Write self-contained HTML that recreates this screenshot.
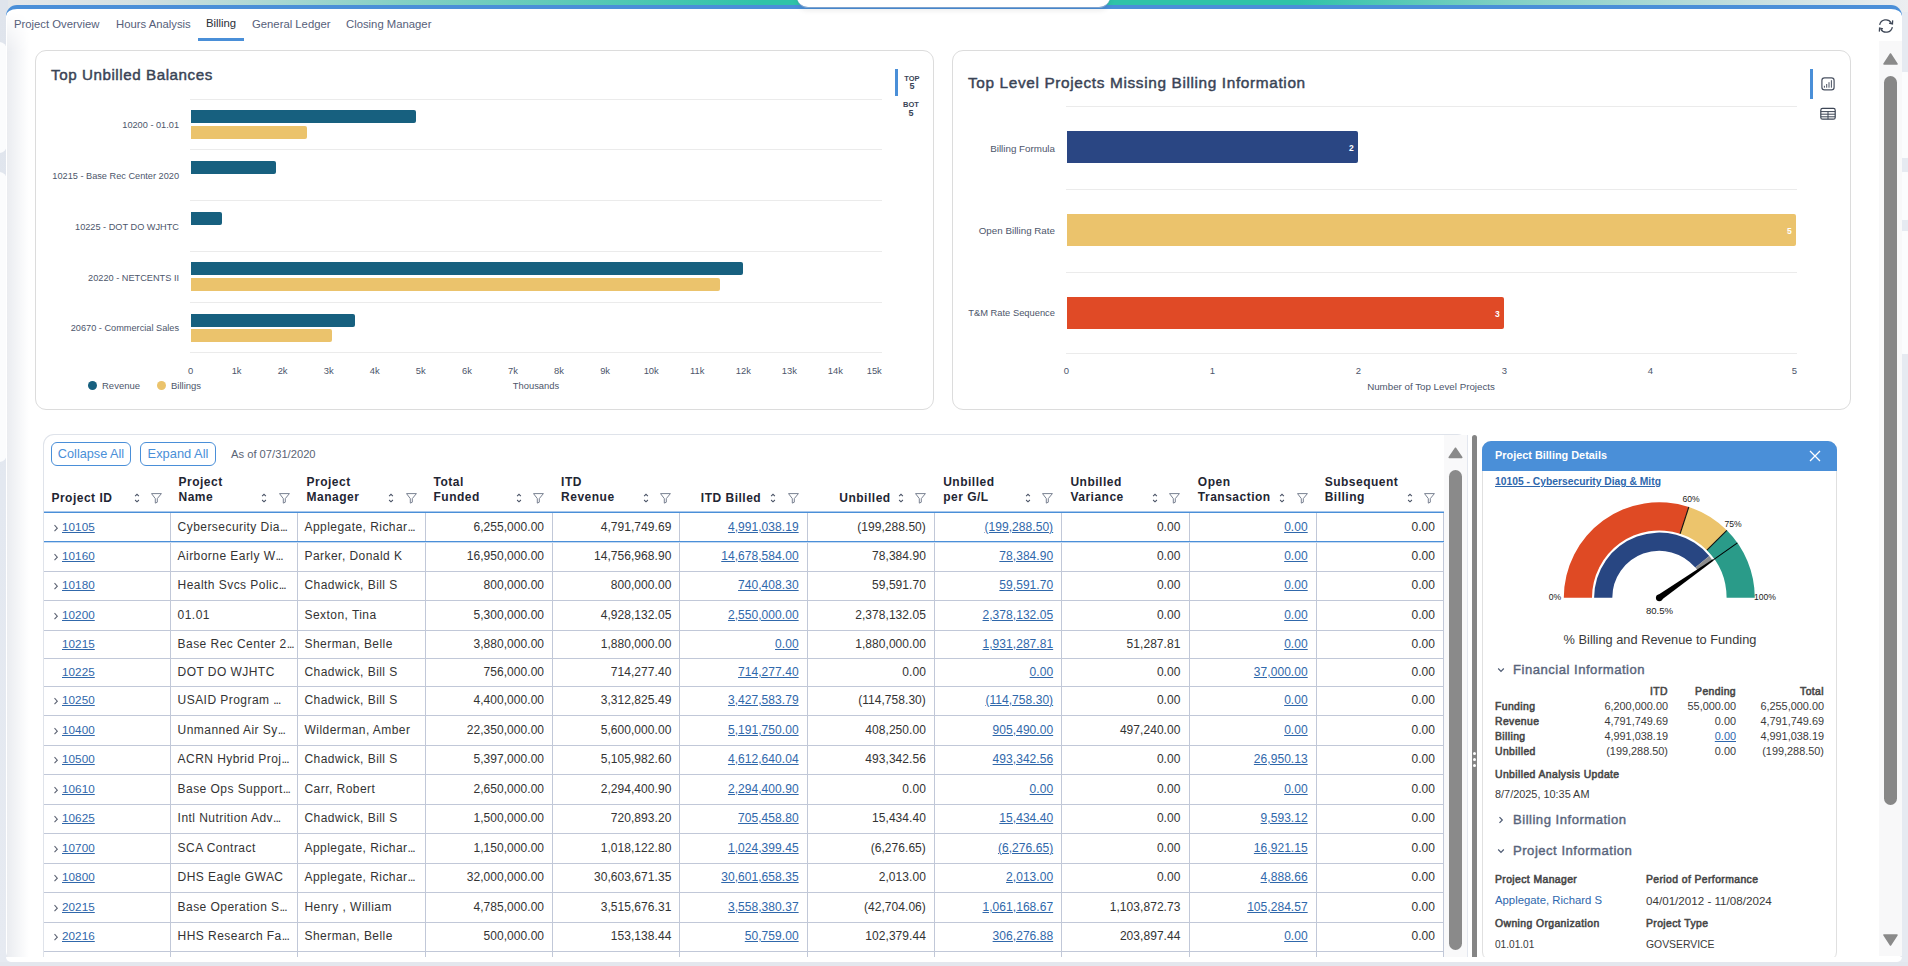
<!DOCTYPE html><html><head><meta charset='utf-8'><style>
*{box-sizing:border-box;margin:0;padding:0}
html,body{width:1908px;height:966px;overflow:hidden;background:#e6eaf1;font-family:"Liberation Sans", sans-serif;color:#333}
.a{position:absolute;white-space:nowrap}
.topgrad{position:absolute;left:0;top:0;width:1908px;height:12px;background:linear-gradient(90deg,#e6e8eb 0%,#d3e0e2 7%,#84d0c4 21%,#2fc3a8 40%,#2fc3a8 68%,#80d0c4 79%,#c6dfe0 92%,#eceef1 100%)}
.leftgrad{position:absolute;left:0;top:0;width:8px;height:966px;background:linear-gradient(180deg,#dfe4ec 0%,#e3e8f0 50%,#e6eaf1 100%)}
.panel{position:absolute;left:6px;top:5px;width:1896px;height:957px;background:#fff;border-radius:11px;border-top:4px solid #4a8fd8}
.card{position:absolute;background:#fff;border:1px solid #dcdcdc;border-radius:11px}
.tab{position:absolute;top:18px;font-size:11.3px;color:#56607a;white-space:nowrap}
.ylab{position:absolute;font-size:9.2px;color:#4d566b;white-space:nowrap;text-align:right}
.xlab{position:absolute;font-size:9.4px;color:#4d566b;white-space:nowrap;transform:translateX(-50%)}
.grid{position:absolute;height:1px;background:#ebebeb}
.bar{position:absolute;border-radius:0 2px 2px 0}
.th{position:absolute;font-size:12px;font-weight:bold;color:#1f2633;letter-spacing:0.5px;line-height:15px;white-space:nowrap}
.td{position:absolute;font-size:12px;color:#333;white-space:nowrap;letter-spacing:0.05px}
.tdt{letter-spacing:0.45px}
.lk{color:#3068ab;text-decoration:underline;text-underline-offset:0.6px}
.vl{position:absolute;width:1px;background:#c1c8d8}
.hl{position:absolute;height:1px;background:#c1c8d8}
</style></head><body>
<div class='topgrad'></div><div class='leftgrad'></div>
<div class='a' style='left:-10px;top:42px;width:17px;height:111px;background:#fbfcfd;border-radius:8px'></div>
<div class='a' style='left:-10px;top:172px;width:17px;height:290px;background:#fbfcfd;border-radius:8px'></div>
<div class='a' style='left:1895px;top:72px;width:20px;height:86px;background:#fbfcfd;border-radius:8px'></div>
<div class='a' style='left:1895px;top:172px;width:20px;height:48px;background:#fbfcfd;border-radius:8px'></div>
<div class='a' style='left:1895px;top:231px;width:20px;height:123px;background:#fbfcfd;border-radius:8px'></div>
<div class='panel'></div>
<div class='a' style='left:797px;top:-10px;width:313px;height:18px;background:#fff;border-radius:0 0 11px 11px;border-bottom:1px solid #7ea3cf;box-shadow:0 3px 5px rgba(0,0,0,0.07)'></div>
<div class='a' style='left:7px;top:12px;width:22px;height:945px;background:linear-gradient(90deg,#eaecf0,#fff);-webkit-mask-image:linear-gradient(180deg,transparent 0,#000 40px)'></div>
<div class='tab' style='left:14px;'>Project Overview</div>
<div class='tab' style='left:116px;'>Hours Analysis</div>
<div class='tab' style='left:206px;color:#2b2f38;top:17px;'>Billing</div>
<div class='tab' style='left:252px;'>General Ledger</div>
<div class='tab' style='left:346px;'>Closing Manager</div>
<div class='a' style='left:198px;top:38px;width:46px;height:3px;background:#4a8fd8'></div>
<svg class='a' style='left:1877px;top:17.3px' width='18' height='18' viewBox='0 0 17 17'><g fill='none' stroke='#3d4656' stroke-width='1.2'><path d='M2.5 7.5 A6 6 0 0 1 13.5 5.5'/><path d='M14.5 9.5 A6 6 0 0 1 3.5 11.5'/></g><path d='M14.8 3.2 L14.6 6.6 L11.4 5.8' fill='none' stroke='#3d4656' stroke-width='1.2'/><path d='M2.2 13.8 L2.4 10.4 L5.6 11.2' fill='none' stroke='#3d4656' stroke-width='1.15'/></svg>
<div class='a' style='left:1879px;top:41px;width:23px;height:915px;background:#f8f8f9'></div>
<svg class='a' style='left:1883px;top:53px' width='15' height='12'><path d='M7.5 1 L14 11 L1 11 Z' fill='#8a8a8a' stroke='#8a8a8a' stroke-width='1.5' stroke-linejoin='round'/></svg>
<div class='a' style='left:1884px;top:76px;width:13px;height:729px;background:#878787;border-radius:7px'></div>
<svg class='a' style='left:1883px;top:934px' width='15' height='12'><path d='M1 1 L14 1 L7.5 11 Z' fill='#8a8a8a' stroke='#8a8a8a' stroke-width='1.5' stroke-linejoin='round'/></svg>
<div class='card' style='left:35px;top:50px;width:899px;height:360px'></div>
<div class='a' style='left:51px;top:66px;font-size:15.2px;letter-spacing:0.55px;-webkit-text-stroke:0.45px #3a4456;color:#3a4456'>Top Unbilled Balances</div>
<div class='grid' style='left:190px;top:99px;width:692px'></div>
<div class='grid' style='left:190px;top:149px;width:692px'></div>
<div class='grid' style='left:190px;top:200px;width:692px'></div>
<div class='grid' style='left:190px;top:251px;width:692px'></div>
<div class='grid' style='left:190px;top:302px;width:692px'></div>
<div class='grid' style='left:190px;top:352px;width:692px'></div>
<div class='bar' style='left:191px;top:110px;width:225px;height:13px;background:#17607f'></div>
<div class='bar' style='left:191px;top:126px;width:116px;height:13px;background:#ebc36c'></div>
<div class='bar' style='left:191px;top:161px;width:85px;height:13px;background:#17607f'></div>
<div class='bar' style='left:191px;top:212px;width:31px;height:13px;background:#17607f'></div>
<div class='bar' style='left:191px;top:262px;width:552px;height:13px;background:#17607f'></div>
<div class='bar' style='left:191px;top:278px;width:529px;height:13px;background:#ebc36c'></div>
<div class='bar' style='left:191px;top:314px;width:164px;height:13px;background:#17607f'></div>
<div class='bar' style='left:191px;top:329px;width:141px;height:13px;background:#ebc36c'></div>
<div class='ylab' style='right:1729px;top:120px'>10200 - 01.01</div>
<div class='ylab' style='right:1729px;top:171px'>10215 - Base Rec Center 2020</div>
<div class='ylab' style='right:1729px;top:222px'>10225 - DOT DO WJHTC</div>
<div class='ylab' style='right:1729px;top:273px'>20220 - NETCENTS II</div>
<div class='ylab' style='right:1729px;top:323px'>20670 - Commercial Sales</div>
<div class='xlab' style='left:190.5px;top:365px'>0</div>
<div class='xlab' style='left:236.6px;top:365px'>1k</div>
<div class='xlab' style='left:282.6px;top:365px'>2k</div>
<div class='xlab' style='left:328.7px;top:365px'>3k</div>
<div class='xlab' style='left:374.8px;top:365px'>4k</div>
<div class='xlab' style='left:420.8px;top:365px'>5k</div>
<div class='xlab' style='left:466.9px;top:365px'>6k</div>
<div class='xlab' style='left:513.0px;top:365px'>7k</div>
<div class='xlab' style='left:559.0px;top:365px'>8k</div>
<div class='xlab' style='left:605.1px;top:365px'>9k</div>
<div class='xlab' style='left:651.2px;top:365px'>10k</div>
<div class='xlab' style='left:697.2px;top:365px'>11k</div>
<div class='xlab' style='left:743.3px;top:365px'>12k</div>
<div class='xlab' style='left:789.4px;top:365px'>13k</div>
<div class='xlab' style='left:835.4px;top:365px'>14k</div>
<div class='xlab' style='left:881.8px;top:365px;transform:translateX(-100%)'>15k</div>
<div class='xlab' style='left:536px;top:380px'>Thousands</div>
<div class='a' style='left:88px;top:381px;width:9px;height:9px;border-radius:50%;background:#17607f'></div>
<div class='a' style='left:102px;top:380px;font-size:9.5px;color:#4d566b'>Revenue</div>
<div class='a' style='left:157px;top:381px;width:9px;height:9px;border-radius:50%;background:#ebc36c'></div>
<div class='a' style='left:171px;top:380px;font-size:9.5px;color:#4d566b'>Billings</div>
<div class='a' style='left:895px;top:69px;width:3px;height:27px;background:#4a8fd8'></div>
<div style='position:absolute;width:20px;text-align:center;font-weight:bold;color:#3a4456;line-height:9px;left:902px;top:73.5px;font-size:7.5px'>TOP</div>
<div style='position:absolute;width:20px;text-align:center;font-weight:bold;color:#3a4456;line-height:9px;left:902px;top:82px;font-size:9px'>5</div>
<div style='position:absolute;width:20px;text-align:center;font-weight:bold;color:#3a4456;line-height:9px;left:901px;top:100.2px;font-size:7.5px'>BOT</div>
<div style='position:absolute;width:20px;text-align:center;font-weight:bold;color:#3a4456;line-height:9px;left:901px;top:109px;font-size:9px'>5</div>
<div class='card' style='left:952px;top:50px;width:899px;height:360px'></div>
<div class='a' style='left:968px;top:74px;font-size:15.4px;letter-spacing:0.63px;-webkit-text-stroke:0.45px #3a4456;color:#3a4456'>Top Level Projects Missing Billing Information</div>
<div class='grid' style='left:1066px;top:106px;width:731px'></div>
<div class='grid' style='left:1066px;top:189px;width:731px'></div>
<div class='grid' style='left:1066px;top:272px;width:731px'></div>
<div class='grid' style='left:1066px;top:353px;width:731px'></div>
<div class='bar' style='left:1067px;top:131px;width:291px;height:32px;background:#2a4683'></div>
<div class='bar' style='left:1067px;top:214px;width:729px;height:32px;background:#ebc36c'></div>
<div class='bar' style='left:1067px;top:297px;width:437px;height:32px;background:#e04a26'></div>
<div class='a' style='left:1349px;top:143px;font-size:8.5px;font-weight:bold;color:#fff'>2</div>
<div class='a' style='left:1787px;top:226px;font-size:8.5px;font-weight:bold;color:#fff'>5</div>
<div class='a' style='left:1495px;top:309px;font-size:8.5px;font-weight:bold;color:#fff'>3</div>
<div class='ylab' style='right:853px;top:142.80px;font-size:9.8px'>Billing Formula</div>
<div class='ylab' style='right:853px;top:224.80px;font-size:9.8px'>Open Billing Rate</div>
<div class='ylab' style='right:853px;top:308.03px;font-size:9.35px'>T&amp;M Rate Sequence</div>
<div class='xlab' style='left:1066.5px;top:365px;font-size:9.5px'>0</div>
<div class='xlab' style='left:1212.5px;top:365px;font-size:9.5px'>1</div>
<div class='xlab' style='left:1358.5px;top:365px;font-size:9.5px'>2</div>
<div class='xlab' style='left:1504.5px;top:365px;font-size:9.5px'>3</div>
<div class='xlab' style='left:1650.5px;top:365px;font-size:9.5px'>4</div>
<div class='xlab' style='left:1797px;top:365px;font-size:9.5px;transform:translateX(-100%)'>5</div>
<div class='xlab' style='left:1431px;top:380.5px;font-size:9.75px'>Number of Top Level Projects</div>
<div class='a' style='left:1810px;top:69px;width:3px;height:30px;background:#4a8fd8'></div>
<svg class='a' style='left:1815px;top:70px' width='25' height='55' viewBox='1815 70 25 55'><rect x='1821.9' y='77.8' width='12.2' height='12' rx='2.6' fill='none' stroke='#4a5262' stroke-width='1.2'/><g stroke='#4a5262' stroke-width='1.0' stroke-linecap='round'><path d='M1824.4 87.3V86.2'/><path d='M1826.7 87.3V84.4'/><path d='M1829 87.3V82.6'/><path d='M1831.4 87.3V80.6'/></g><rect x='1820.8' y='108.4' width='14.4' height='10.8' rx='1.8' fill='none' stroke='#3d4656' stroke-width='1.2'/><g stroke='#3d4656' stroke-width='1.0'><path d='M1820.8 111.6H1835.2'/><path d='M1820.8 114.2H1835.2'/><path d='M1820.8 116.8H1835.2'/><path d='M1828 111.6V119.2'/></g></svg>
<div class='a' style='left:43px;top:434px;width:1425px;height:530px;border:1px solid #dfe3ea;border-bottom:none;border-radius:11px 11px 0 0;background:#fff'></div>
<div class='a' style='left:51px;top:442px;width:80px;height:24px;border:1px solid #4a8fd8;border-radius:6px;font-size:12.7px;color:#4a8fd8;line-height:22px;text-align:center'>Collapse All</div>
<div class='a' style='left:140px;top:442px;width:76px;height:24px;border:1px solid #4a8fd8;border-radius:6px;font-size:12.9px;color:#4a8fd8;line-height:22px;text-align:center'>Expand All</div>
<div class='a' style='left:231px;top:448px;font-size:11.2px;color:#5b6475'>As of 07/31/2020</div>
<div class='th' style='left:51.4px;top:490.6px'>Project ID</div>
<svg class='a' style='left:133.9px;top:492px' width='6' height='12' viewBox='0 0 6 12'><path d='M1.1 4.1 L3 2.3 L4.9 4.1 M1.1 8 L3 9.8 L4.9 8' fill='none' stroke='#4a5366' stroke-width='1.05'/></svg>
<svg class='a' style='left:151.3px;top:492.5px' width='12' height='11' viewBox='0 0 12 11'><path d='M0.5 0.6 H10.4 L6.3 5.6 V9.2 L4.3 10.1 V5.6 Z' fill='none' stroke='#737b8c' stroke-width='0.95' stroke-linejoin='round'/></svg>
<div class='th' style='left:178.5px;top:475.3px'>Project<br>Name</div>
<svg class='a' style='left:261.1px;top:492px' width='6' height='12' viewBox='0 0 6 12'><path d='M1.1 4.1 L3 2.3 L4.9 4.1 M1.1 8 L3 9.8 L4.9 8' fill='none' stroke='#4a5366' stroke-width='1.05'/></svg>
<svg class='a' style='left:278.5px;top:492.5px' width='12' height='11' viewBox='0 0 12 11'><path d='M0.5 0.6 H10.4 L6.3 5.6 V9.2 L4.3 10.1 V5.6 Z' fill='none' stroke='#737b8c' stroke-width='0.95' stroke-linejoin='round'/></svg>
<div class='th' style='left:306.5px;top:475.3px'>Project<br>Manager</div>
<svg class='a' style='left:388.4px;top:492px' width='6' height='12' viewBox='0 0 6 12'><path d='M1.1 4.1 L3 2.3 L4.9 4.1 M1.1 8 L3 9.8 L4.9 8' fill='none' stroke='#4a5366' stroke-width='1.05'/></svg>
<svg class='a' style='left:405.8px;top:492.5px' width='12' height='11' viewBox='0 0 12 11'><path d='M0.5 0.6 H10.4 L6.3 5.6 V9.2 L4.3 10.1 V5.6 Z' fill='none' stroke='#737b8c' stroke-width='0.95' stroke-linejoin='round'/></svg>
<div class='th' style='left:433.5px;top:475.3px'>Total<br>Funded</div>
<svg class='a' style='left:515.7px;top:492px' width='6' height='12' viewBox='0 0 6 12'><path d='M1.1 4.1 L3 2.3 L4.9 4.1 M1.1 8 L3 9.8 L4.9 8' fill='none' stroke='#4a5366' stroke-width='1.05'/></svg>
<svg class='a' style='left:533.1px;top:492.5px' width='12' height='11' viewBox='0 0 12 11'><path d='M0.5 0.6 H10.4 L6.3 5.6 V9.2 L4.3 10.1 V5.6 Z' fill='none' stroke='#737b8c' stroke-width='0.95' stroke-linejoin='round'/></svg>
<div class='th' style='left:561.1px;top:475.3px'>ITD<br>Revenue</div>
<svg class='a' style='left:643.0px;top:492px' width='6' height='12' viewBox='0 0 6 12'><path d='M1.1 4.1 L3 2.3 L4.9 4.1 M1.1 8 L3 9.8 L4.9 8' fill='none' stroke='#4a5366' stroke-width='1.05'/></svg>
<svg class='a' style='left:660.4px;top:492.5px' width='12' height='11' viewBox='0 0 12 11'><path d='M0.5 0.6 H10.4 L6.3 5.6 V9.2 L4.3 10.1 V5.6 Z' fill='none' stroke='#737b8c' stroke-width='0.95' stroke-linejoin='round'/></svg>
<div class='th' style='left:700.8px;top:490.6px'>ITD Billed</div>
<svg class='a' style='left:770.2px;top:492px' width='6' height='12' viewBox='0 0 6 12'><path d='M1.1 4.1 L3 2.3 L4.9 4.1 M1.1 8 L3 9.8 L4.9 8' fill='none' stroke='#4a5366' stroke-width='1.05'/></svg>
<svg class='a' style='left:787.6px;top:492.5px' width='12' height='11' viewBox='0 0 12 11'><path d='M0.5 0.6 H10.4 L6.3 5.6 V9.2 L4.3 10.1 V5.6 Z' fill='none' stroke='#737b8c' stroke-width='0.95' stroke-linejoin='round'/></svg>
<div class='th' style='left:839.3px;top:490.6px'>Unbilled</div>
<svg class='a' style='left:897.5px;top:492px' width='6' height='12' viewBox='0 0 6 12'><path d='M1.1 4.1 L3 2.3 L4.9 4.1 M1.1 8 L3 9.8 L4.9 8' fill='none' stroke='#4a5366' stroke-width='1.05'/></svg>
<svg class='a' style='left:914.9px;top:492.5px' width='12' height='11' viewBox='0 0 12 11'><path d='M0.5 0.6 H10.4 L6.3 5.6 V9.2 L4.3 10.1 V5.6 Z' fill='none' stroke='#737b8c' stroke-width='0.95' stroke-linejoin='round'/></svg>
<div class='th' style='left:943.2px;top:475.3px'>Unbilled<br>per G/L</div>
<svg class='a' style='left:1024.8px;top:492px' width='6' height='12' viewBox='0 0 6 12'><path d='M1.1 4.1 L3 2.3 L4.9 4.1 M1.1 8 L3 9.8 L4.9 8' fill='none' stroke='#4a5366' stroke-width='1.05'/></svg>
<svg class='a' style='left:1042.2px;top:492.5px' width='12' height='11' viewBox='0 0 12 11'><path d='M0.5 0.6 H10.4 L6.3 5.6 V9.2 L4.3 10.1 V5.6 Z' fill='none' stroke='#737b8c' stroke-width='0.95' stroke-linejoin='round'/></svg>
<div class='th' style='left:1070.4px;top:475.3px'>Unbilled<br>Variance</div>
<svg class='a' style='left:1152.0px;top:492px' width='6' height='12' viewBox='0 0 6 12'><path d='M1.1 4.1 L3 2.3 L4.9 4.1 M1.1 8 L3 9.8 L4.9 8' fill='none' stroke='#4a5366' stroke-width='1.05'/></svg>
<svg class='a' style='left:1169.4px;top:492.5px' width='12' height='11' viewBox='0 0 12 11'><path d='M0.5 0.6 H10.4 L6.3 5.6 V9.2 L4.3 10.1 V5.6 Z' fill='none' stroke='#737b8c' stroke-width='0.95' stroke-linejoin='round'/></svg>
<div class='th' style='left:1197.8px;top:475.3px'>Open<br>Transaction</div>
<svg class='a' style='left:1279.3px;top:492px' width='6' height='12' viewBox='0 0 6 12'><path d='M1.1 4.1 L3 2.3 L4.9 4.1 M1.1 8 L3 9.8 L4.9 8' fill='none' stroke='#4a5366' stroke-width='1.05'/></svg>
<svg class='a' style='left:1296.7px;top:492.5px' width='12' height='11' viewBox='0 0 12 11'><path d='M0.5 0.6 H10.4 L6.3 5.6 V9.2 L4.3 10.1 V5.6 Z' fill='none' stroke='#737b8c' stroke-width='0.95' stroke-linejoin='round'/></svg>
<div class='th' style='left:1324.7px;top:475.3px'>Subsequent<br>Billing</div>
<svg class='a' style='left:1406.6px;top:492px' width='6' height='12' viewBox='0 0 6 12'><path d='M1.1 4.1 L3 2.3 L4.9 4.1 M1.1 8 L3 9.8 L4.9 8' fill='none' stroke='#4a5366' stroke-width='1.05'/></svg>
<svg class='a' style='left:1424.0px;top:492.5px' width='12' height='11' viewBox='0 0 12 11'><path d='M0.5 0.6 H10.4 L6.3 5.6 V9.2 L4.3 10.1 V5.6 Z' fill='none' stroke='#737b8c' stroke-width='0.95' stroke-linejoin='round'/></svg>
<div class='a' style='left:43px;top:434px;width:1401px;height:523px;overflow:hidden'>
<div class='vl' style='left:127.00px;top:78.00px;height:450px'></div>
<div class='vl' style='left:254.00px;top:78.00px;height:450px'></div>
<div class='vl' style='left:382.00px;top:78.00px;height:450px'></div>
<div class='vl' style='left:509.00px;top:78.00px;height:450px'></div>
<div class='vl' style='left:636.00px;top:78.00px;height:450px'></div>
<div class='vl' style='left:764.00px;top:78.00px;height:450px'></div>
<div class='vl' style='left:891.00px;top:78.00px;height:450px'></div>
<div class='vl' style='left:1018.00px;top:78.00px;height:450px'></div>
<div class='vl' style='left:1146.00px;top:78.00px;height:450px'></div>
<div class='vl' style='left:1273.00px;top:78.00px;height:450px'></div>
<div class='vl' style='left:1400.00px;top:78.00px;height:450px'></div>
<div class='hl' style='left:0.50px;top:107.00px;width:1400px'></div>
<svg class='a' style='left:9.60px;top:90.00px' width='6' height='8' viewBox='0 0 6 8'><path d='M1.5 1.2 L4.3 4.2 L1.5 7.2' fill='none' stroke='#5d6373' stroke-width='1.1'/></svg>
<div class='td lk' style='left:19.00px;top:86.00px;font-size:11.7px'>10105</div>
<div class='td tdt' style='left:134.60px;top:86.00px'>Cybersecurity Dia<span style="letter-spacing:-1px">...</span></div>
<div class='td tdt' style='left:261.50px;top:86.00px'>Applegate, Richar<span style="letter-spacing:-1px">...</span></div>
<div class='td' style='right:899.92px;top:86.00px;font-size:12px'>6,255,000.00</div>
<div class='td' style='right:772.65px;top:86.00px;font-size:12px'>4,791,749.69</div>
<div class='td lk' style='right:645.38px;top:86.00px;font-size:12px'>4,991,038.19</div>
<div class='td' style='right:518.11px;top:86.00px;font-size:12px'>(199,288.50)</div>
<div class='td lk' style='right:390.84px;top:86.00px;font-size:12px'>(199,288.50)</div>
<div class='td' style='right:263.57px;top:86.00px;font-size:12px'>0.00</div>
<div class='td lk' style='right:136.30px;top:86.00px;font-size:12px'>0.00</div>
<div class='td' style='right:9.03px;top:86.00px;font-size:12px'>0.00</div>
<div class='hl' style='left:0.50px;top:136.50px;width:1400px'></div>
<svg class='a' style='left:9.60px;top:119.00px' width='6' height='8' viewBox='0 0 6 8'><path d='M1.5 1.2 L4.3 4.2 L1.5 7.2' fill='none' stroke='#5d6373' stroke-width='1.1'/></svg>
<div class='td lk' style='left:19.00px;top:115.00px;font-size:11.7px'>10160</div>
<div class='td tdt' style='left:134.60px;top:115.00px'>Airborne Early W<span style="letter-spacing:-1px">...</span></div>
<div class='td tdt' style='left:261.50px;top:115.00px'>Parker, Donald K</div>
<div class='td' style='right:899.92px;top:115.00px;font-size:12px'>16,950,000.00</div>
<div class='td' style='right:772.65px;top:115.00px;font-size:12px'>14,756,968.90</div>
<div class='td lk' style='right:645.38px;top:115.00px;font-size:12px'>14,678,584.00</div>
<div class='td' style='right:518.11px;top:115.00px;font-size:12px'>78,384.90</div>
<div class='td lk' style='right:390.84px;top:115.00px;font-size:12px'>78,384.90</div>
<div class='td' style='right:263.57px;top:115.00px;font-size:12px'>0.00</div>
<div class='td lk' style='right:136.30px;top:115.00px;font-size:12px'>0.00</div>
<div class='td' style='right:9.03px;top:115.00px;font-size:12px'>0.00</div>
<div class='hl' style='left:0.50px;top:166.00px;width:1400px'></div>
<svg class='a' style='left:9.60px;top:148.00px' width='6' height='8' viewBox='0 0 6 8'><path d='M1.5 1.2 L4.3 4.2 L1.5 7.2' fill='none' stroke='#5d6373' stroke-width='1.1'/></svg>
<div class='td lk' style='left:19.00px;top:144.00px;font-size:11.7px'>10180</div>
<div class='td tdt' style='left:134.60px;top:144.00px'>Health Svcs Polic<span style="letter-spacing:-1px">...</span></div>
<div class='td tdt' style='left:261.50px;top:144.00px'>Chadwick, Bill S</div>
<div class='td' style='right:899.92px;top:144.00px;font-size:12px'>800,000.00</div>
<div class='td' style='right:772.65px;top:144.00px;font-size:12px'>800,000.00</div>
<div class='td lk' style='right:645.38px;top:144.00px;font-size:12px'>740,408.30</div>
<div class='td' style='right:518.11px;top:144.00px;font-size:12px'>59,591.70</div>
<div class='td lk' style='right:390.84px;top:144.00px;font-size:12px'>59,591.70</div>
<div class='td' style='right:263.57px;top:144.00px;font-size:12px'>0.00</div>
<div class='td lk' style='right:136.30px;top:144.00px;font-size:12px'>0.00</div>
<div class='td' style='right:9.03px;top:144.00px;font-size:12px'>0.00</div>
<div class='hl' style='left:0.50px;top:195.50px;width:1400px'></div>
<svg class='a' style='left:9.60px;top:178.00px' width='6' height='8' viewBox='0 0 6 8'><path d='M1.5 1.2 L4.3 4.2 L1.5 7.2' fill='none' stroke='#5d6373' stroke-width='1.1'/></svg>
<div class='td lk' style='left:19.00px;top:174.00px;font-size:11.7px'>10200</div>
<div class='td tdt' style='left:134.60px;top:174.00px'>01.01</div>
<div class='td tdt' style='left:261.50px;top:174.00px'>Sexton, Tina</div>
<div class='td' style='right:899.92px;top:174.00px;font-size:12px'>5,300,000.00</div>
<div class='td' style='right:772.65px;top:174.00px;font-size:12px'>4,928,132.05</div>
<div class='td lk' style='right:645.38px;top:174.00px;font-size:12px'>2,550,000.00</div>
<div class='td' style='right:518.11px;top:174.00px;font-size:12px'>2,378,132.05</div>
<div class='td lk' style='right:390.84px;top:174.00px;font-size:12px'>2,378,132.05</div>
<div class='td' style='right:263.57px;top:174.00px;font-size:12px'>0.00</div>
<div class='td lk' style='right:136.30px;top:174.00px;font-size:12px'>0.00</div>
<div class='td' style='right:9.03px;top:174.00px;font-size:12px'>0.00</div>
<div class='hl' style='left:0.50px;top:223.50px;width:1400px'></div>
<div class='td lk' style='left:19.00px;top:203.00px;font-size:11.7px'>10215</div>
<div class='td tdt' style='left:134.60px;top:203.00px'>Base Rec Center 2<span style="letter-spacing:-1px">...</span></div>
<div class='td tdt' style='left:261.50px;top:203.00px'>Sherman, Belle</div>
<div class='td' style='right:899.92px;top:203.00px;font-size:12px'>3,880,000.00</div>
<div class='td' style='right:772.65px;top:203.00px;font-size:12px'>1,880,000.00</div>
<div class='td lk' style='right:645.38px;top:203.00px;font-size:12px'>0.00</div>
<div class='td' style='right:518.11px;top:203.00px;font-size:12px'>1,880,000.00</div>
<div class='td lk' style='right:390.84px;top:203.00px;font-size:12px'>1,931,287.81</div>
<div class='td' style='right:263.57px;top:203.00px;font-size:12px'>51,287.81</div>
<div class='td lk' style='right:136.30px;top:203.00px;font-size:12px'>0.00</div>
<div class='td' style='right:9.03px;top:203.00px;font-size:12px'>0.00</div>
<div class='hl' style='left:0.50px;top:251.50px;width:1400px'></div>
<div class='td lk' style='left:19.00px;top:231.00px;font-size:11.7px'>10225</div>
<div class='td tdt' style='left:134.60px;top:231.00px'>DOT DO WJHTC</div>
<div class='td tdt' style='left:261.50px;top:231.00px'>Chadwick, Bill S</div>
<div class='td' style='right:899.92px;top:231.00px;font-size:12px'>756,000.00</div>
<div class='td' style='right:772.65px;top:231.00px;font-size:12px'>714,277.40</div>
<div class='td lk' style='right:645.38px;top:231.00px;font-size:12px'>714,277.40</div>
<div class='td' style='right:518.11px;top:231.00px;font-size:12px'>0.00</div>
<div class='td lk' style='right:390.84px;top:231.00px;font-size:12px'>0.00</div>
<div class='td' style='right:263.57px;top:231.00px;font-size:12px'>0.00</div>
<div class='td lk' style='right:136.30px;top:231.00px;font-size:12px'>37,000.00</div>
<div class='td' style='right:9.03px;top:231.00px;font-size:12px'>0.00</div>
<div class='hl' style='left:0.50px;top:281.00px;width:1400px'></div>
<svg class='a' style='left:9.60px;top:263.00px' width='6' height='8' viewBox='0 0 6 8'><path d='M1.5 1.2 L4.3 4.2 L1.5 7.2' fill='none' stroke='#5d6373' stroke-width='1.1'/></svg>
<div class='td lk' style='left:19.00px;top:259.00px;font-size:11.7px'>10250</div>
<div class='td tdt' style='left:134.60px;top:259.00px'>USAID Program <span style="letter-spacing:-1px">...</span></div>
<div class='td tdt' style='left:261.50px;top:259.00px'>Chadwick, Bill S</div>
<div class='td' style='right:899.92px;top:259.00px;font-size:12px'>4,400,000.00</div>
<div class='td' style='right:772.65px;top:259.00px;font-size:12px'>3,312,825.49</div>
<div class='td lk' style='right:645.38px;top:259.00px;font-size:12px'>3,427,583.79</div>
<div class='td' style='right:518.11px;top:259.00px;font-size:12px'>(114,758.30)</div>
<div class='td lk' style='right:390.84px;top:259.00px;font-size:12px'>(114,758.30)</div>
<div class='td' style='right:263.57px;top:259.00px;font-size:12px'>0.00</div>
<div class='td lk' style='right:136.30px;top:259.00px;font-size:12px'>0.00</div>
<div class='td' style='right:9.03px;top:259.00px;font-size:12px'>0.00</div>
<div class='hl' style='left:0.50px;top:310.50px;width:1400px'></div>
<svg class='a' style='left:9.60px;top:293.00px' width='6' height='8' viewBox='0 0 6 8'><path d='M1.5 1.2 L4.3 4.2 L1.5 7.2' fill='none' stroke='#5d6373' stroke-width='1.1'/></svg>
<div class='td lk' style='left:19.00px;top:289.00px;font-size:11.7px'>10400</div>
<div class='td tdt' style='left:134.60px;top:289.00px'>Unmanned Air Sy<span style="letter-spacing:-1px">...</span></div>
<div class='td tdt' style='left:261.50px;top:289.00px'>Wilderman, Amber</div>
<div class='td' style='right:899.92px;top:289.00px;font-size:12px'>22,350,000.00</div>
<div class='td' style='right:772.65px;top:289.00px;font-size:12px'>5,600,000.00</div>
<div class='td lk' style='right:645.38px;top:289.00px;font-size:12px'>5,191,750.00</div>
<div class='td' style='right:518.11px;top:289.00px;font-size:12px'>408,250.00</div>
<div class='td lk' style='right:390.84px;top:289.00px;font-size:12px'>905,490.00</div>
<div class='td' style='right:263.57px;top:289.00px;font-size:12px'>497,240.00</div>
<div class='td lk' style='right:136.30px;top:289.00px;font-size:12px'>0.00</div>
<div class='td' style='right:9.03px;top:289.00px;font-size:12px'>0.00</div>
<div class='hl' style='left:0.50px;top:340.00px;width:1400px'></div>
<svg class='a' style='left:9.60px;top:322.00px' width='6' height='8' viewBox='0 0 6 8'><path d='M1.5 1.2 L4.3 4.2 L1.5 7.2' fill='none' stroke='#5d6373' stroke-width='1.1'/></svg>
<div class='td lk' style='left:19.00px;top:318.00px;font-size:11.7px'>10500</div>
<div class='td tdt' style='left:134.60px;top:318.00px'>ACRN Hybrid Proj<span style="letter-spacing:-1px">...</span></div>
<div class='td tdt' style='left:261.50px;top:318.00px'>Chadwick, Bill S</div>
<div class='td' style='right:899.92px;top:318.00px;font-size:12px'>5,397,000.00</div>
<div class='td' style='right:772.65px;top:318.00px;font-size:12px'>5,105,982.60</div>
<div class='td lk' style='right:645.38px;top:318.00px;font-size:12px'>4,612,640.04</div>
<div class='td' style='right:518.11px;top:318.00px;font-size:12px'>493,342.56</div>
<div class='td lk' style='right:390.84px;top:318.00px;font-size:12px'>493,342.56</div>
<div class='td' style='right:263.57px;top:318.00px;font-size:12px'>0.00</div>
<div class='td lk' style='right:136.30px;top:318.00px;font-size:12px'>26,950.13</div>
<div class='td' style='right:9.03px;top:318.00px;font-size:12px'>0.00</div>
<div class='hl' style='left:0.50px;top:369.50px;width:1400px'></div>
<svg class='a' style='left:9.60px;top:352.00px' width='6' height='8' viewBox='0 0 6 8'><path d='M1.5 1.2 L4.3 4.2 L1.5 7.2' fill='none' stroke='#5d6373' stroke-width='1.1'/></svg>
<div class='td lk' style='left:19.00px;top:348.00px;font-size:11.7px'>10610</div>
<div class='td tdt' style='left:134.60px;top:348.00px'>Base Ops Support<span style="letter-spacing:-1px">...</span></div>
<div class='td tdt' style='left:261.50px;top:348.00px'>Carr, Robert</div>
<div class='td' style='right:899.92px;top:348.00px;font-size:12px'>2,650,000.00</div>
<div class='td' style='right:772.65px;top:348.00px;font-size:12px'>2,294,400.90</div>
<div class='td lk' style='right:645.38px;top:348.00px;font-size:12px'>2,294,400.90</div>
<div class='td' style='right:518.11px;top:348.00px;font-size:12px'>0.00</div>
<div class='td lk' style='right:390.84px;top:348.00px;font-size:12px'>0.00</div>
<div class='td' style='right:263.57px;top:348.00px;font-size:12px'>0.00</div>
<div class='td lk' style='right:136.30px;top:348.00px;font-size:12px'>0.00</div>
<div class='td' style='right:9.03px;top:348.00px;font-size:12px'>0.00</div>
<div class='hl' style='left:0.50px;top:399.00px;width:1400px'></div>
<svg class='a' style='left:9.60px;top:381.00px' width='6' height='8' viewBox='0 0 6 8'><path d='M1.5 1.2 L4.3 4.2 L1.5 7.2' fill='none' stroke='#5d6373' stroke-width='1.1'/></svg>
<div class='td lk' style='left:19.00px;top:377.00px;font-size:11.7px'>10625</div>
<div class='td tdt' style='left:134.60px;top:377.00px'>Intl Nutrition Adv<span style="letter-spacing:-1px">...</span></div>
<div class='td tdt' style='left:261.50px;top:377.00px'>Chadwick, Bill S</div>
<div class='td' style='right:899.92px;top:377.00px;font-size:12px'>1,500,000.00</div>
<div class='td' style='right:772.65px;top:377.00px;font-size:12px'>720,893.20</div>
<div class='td lk' style='right:645.38px;top:377.00px;font-size:12px'>705,458.80</div>
<div class='td' style='right:518.11px;top:377.00px;font-size:12px'>15,434.40</div>
<div class='td lk' style='right:390.84px;top:377.00px;font-size:12px'>15,434.40</div>
<div class='td' style='right:263.57px;top:377.00px;font-size:12px'>0.00</div>
<div class='td lk' style='right:136.30px;top:377.00px;font-size:12px'>9,593.12</div>
<div class='td' style='right:9.03px;top:377.00px;font-size:12px'>0.00</div>
<div class='hl' style='left:0.50px;top:428.50px;width:1400px'></div>
<svg class='a' style='left:9.60px;top:411.00px' width='6' height='8' viewBox='0 0 6 8'><path d='M1.5 1.2 L4.3 4.2 L1.5 7.2' fill='none' stroke='#5d6373' stroke-width='1.1'/></svg>
<div class='td lk' style='left:19.00px;top:407.00px;font-size:11.7px'>10700</div>
<div class='td tdt' style='left:134.60px;top:407.00px'>SCA Contract</div>
<div class='td tdt' style='left:261.50px;top:407.00px'>Applegate, Richar<span style="letter-spacing:-1px">...</span></div>
<div class='td' style='right:899.92px;top:407.00px;font-size:12px'>1,150,000.00</div>
<div class='td' style='right:772.65px;top:407.00px;font-size:12px'>1,018,122.80</div>
<div class='td lk' style='right:645.38px;top:407.00px;font-size:12px'>1,024,399.45</div>
<div class='td' style='right:518.11px;top:407.00px;font-size:12px'>(6,276.65)</div>
<div class='td lk' style='right:390.84px;top:407.00px;font-size:12px'>(6,276.65)</div>
<div class='td' style='right:263.57px;top:407.00px;font-size:12px'>0.00</div>
<div class='td lk' style='right:136.30px;top:407.00px;font-size:12px'>16,921.15</div>
<div class='td' style='right:9.03px;top:407.00px;font-size:12px'>0.00</div>
<div class='hl' style='left:0.50px;top:458.00px;width:1400px'></div>
<svg class='a' style='left:9.60px;top:440.00px' width='6' height='8' viewBox='0 0 6 8'><path d='M1.5 1.2 L4.3 4.2 L1.5 7.2' fill='none' stroke='#5d6373' stroke-width='1.1'/></svg>
<div class='td lk' style='left:19.00px;top:436.00px;font-size:11.7px'>10800</div>
<div class='td tdt' style='left:134.60px;top:436.00px'>DHS Eagle GWAC</div>
<div class='td tdt' style='left:261.50px;top:436.00px'>Applegate, Richar<span style="letter-spacing:-1px">...</span></div>
<div class='td' style='right:899.92px;top:436.00px;font-size:12px'>32,000,000.00</div>
<div class='td' style='right:772.65px;top:436.00px;font-size:12px'>30,603,671.35</div>
<div class='td lk' style='right:645.38px;top:436.00px;font-size:12px'>30,601,658.35</div>
<div class='td' style='right:518.11px;top:436.00px;font-size:12px'>2,013.00</div>
<div class='td lk' style='right:390.84px;top:436.00px;font-size:12px'>2,013.00</div>
<div class='td' style='right:263.57px;top:436.00px;font-size:12px'>0.00</div>
<div class='td lk' style='right:136.30px;top:436.00px;font-size:12px'>4,888.66</div>
<div class='td' style='right:9.03px;top:436.00px;font-size:12px'>0.00</div>
<div class='hl' style='left:0.50px;top:487.50px;width:1400px'></div>
<svg class='a' style='left:9.60px;top:470.00px' width='6' height='8' viewBox='0 0 6 8'><path d='M1.5 1.2 L4.3 4.2 L1.5 7.2' fill='none' stroke='#5d6373' stroke-width='1.1'/></svg>
<div class='td lk' style='left:19.00px;top:466.00px;font-size:11.7px'>20215</div>
<div class='td tdt' style='left:134.60px;top:466.00px'>Base Operation S<span style="letter-spacing:-1px">...</span></div>
<div class='td tdt' style='left:261.50px;top:466.00px'>Henry , William</div>
<div class='td' style='right:899.92px;top:466.00px;font-size:12px'>4,785,000.00</div>
<div class='td' style='right:772.65px;top:466.00px;font-size:12px'>3,515,676.31</div>
<div class='td lk' style='right:645.38px;top:466.00px;font-size:12px'>3,558,380.37</div>
<div class='td' style='right:518.11px;top:466.00px;font-size:12px'>(42,704.06)</div>
<div class='td lk' style='right:390.84px;top:466.00px;font-size:12px'>1,061,168.67</div>
<div class='td' style='right:263.57px;top:466.00px;font-size:12px'>1,103,872.73</div>
<div class='td lk' style='right:136.30px;top:466.00px;font-size:12px'>105,284.57</div>
<div class='td' style='right:9.03px;top:466.00px;font-size:12px'>0.00</div>
<div class='hl' style='left:0.50px;top:517.00px;width:1400px'></div>
<svg class='a' style='left:9.60px;top:499.00px' width='6' height='8' viewBox='0 0 6 8'><path d='M1.5 1.2 L4.3 4.2 L1.5 7.2' fill='none' stroke='#5d6373' stroke-width='1.1'/></svg>
<div class='td lk' style='left:19.00px;top:495.00px;font-size:11.7px'>20216</div>
<div class='td tdt' style='left:134.60px;top:495.00px'>HHS Research Fa<span style="letter-spacing:-1px">...</span></div>
<div class='td tdt' style='left:261.50px;top:495.00px'>Sherman, Belle</div>
<div class='td' style='right:899.92px;top:495.00px;font-size:12px'>500,000.00</div>
<div class='td' style='right:772.65px;top:495.00px;font-size:12px'>153,138.44</div>
<div class='td lk' style='right:645.38px;top:495.00px;font-size:12px'>50,759.00</div>
<div class='td' style='right:518.11px;top:495.00px;font-size:12px'>102,379.44</div>
<div class='td lk' style='right:390.84px;top:495.00px;font-size:12px'>306,276.88</div>
<div class='td' style='right:263.57px;top:495.00px;font-size:12px'>203,897.44</div>
<div class='td lk' style='right:136.30px;top:495.00px;font-size:12px'>0.00</div>
<div class='td' style='right:9.03px;top:495.00px;font-size:12px'>0.00</div>
<div class='hl' style='left:0.50px;top:546.50px;width:1400px'></div>
<svg class='a' style='left:9.60px;top:528.00px' width='6' height='8' viewBox='0 0 6 8'><path d='M1.5 1.2 L4.3 4.2 L1.5 7.2' fill='none' stroke='#5d6373' stroke-width='1.1'/></svg>
<div class='td lk' style='left:19.00px;top:524.00px;font-size:11.7px'>20300</div>
<div class='td tdt' style='left:134.60px;top:524.00px'></div>
<div class='td tdt' style='left:261.50px;top:524.00px'></div>
<div class='td' style='right:899.92px;top:524.00px;font-size:12px'></div>
<div class='td' style='right:772.65px;top:524.00px;font-size:12px'></div>
<div class='td lk' style='right:645.38px;top:524.00px;font-size:12px'></div>
<div class='td' style='right:518.11px;top:524.00px;font-size:12px'></div>
<div class='td lk' style='right:390.84px;top:524.00px;font-size:12px'></div>
<div class='td' style='right:263.57px;top:524.00px;font-size:12px'></div>
<div class='td lk' style='right:136.30px;top:524.00px;font-size:12px'></div>
<div class='td' style='right:9.03px;top:524.00px;font-size:12px'></div>
<div class='a' style='left:0.50px;top:77.00px;width:1400px;height:1px;background:#a9c8ec'></div>
<div class='a' style='left:0.50px;top:78.00px;width:1400px;height:1px;background:#4a8fd8'></div>
<div class='a' style='left:0.50px;top:107.00px;width:1400px;height:1px;background:#4a8fd8'></div>
<div class='a' style='left:0.50px;top:108.00px;width:1400px;height:1px;background:#c5daf2'></div>
</div>
<div class='a' style='left:1444px;top:435px;width:24px;height:522px;background:#f9f9fa;border-right:1px solid #e3e7ef'></div>
<svg class='a' style='left:1448px;top:447px' width='15' height='12'><path d='M7.5 1.2 L13.8 10.5 L1.2 10.5 Z' fill='#8a8a8a' stroke='#8a8a8a' stroke-width='1.5' stroke-linejoin='round'/></svg>
<div class='a' style='left:1449px;top:470px;width:13px;height:480px;background:#8a8a8a;border-radius:7px'></div>
<div class='a' style='left:1472px;top:435px;width:5px;height:522px;background:#858585;border-radius:3px 3px 0 0'></div>
<div class='a' style='left:1473px;top:751.5px;width:3px;height:3px;border-radius:50%;background:#fff'></div>
<div class='a' style='left:1473px;top:757.5px;width:3px;height:3px;border-radius:50%;background:#fff'></div>
<div class='a' style='left:1473px;top:763.5px;width:3px;height:3px;border-radius:50%;background:#fff'></div>
<div class='a' style='left:1482px;top:441px;width:355px;height:520px;border:1px solid #e0e0e0;border-radius:9px;background:#fff'></div>
<div class='a' style='left:1482px;top:441px;width:355px;height:30px;background:#4a8fd8;border-radius:9px 9px 0 0'></div>
<div class='a' style='left:1495px;top:449px;font-size:10.9px;font-weight:bold;color:#fff'>Project Billing Details</div>
<svg class='a' style='left:1809px;top:450px' width='12' height='12' viewBox='0 0 12 12'><path d='M1 1 L11 11 M11 1 L1 11' stroke='#fff' stroke-width='1.3'/></svg>
<div class='a lk' style='left:1495px;top:476px;font-size:10.3px;font-weight:bold;color:#2e67ad'>10105 - Cybersecurity Diag &amp; Mitg</div>
<svg class='a' style='left:0;top:0' width='1908' height='966' viewBox='0 0 1908 966'><path d='M1563.80 597.80 A95.5 95.5 0 0 1 1688.81 506.97 L1680.10 533.79 A67.3 67.3 0 0 0 1592.00 597.80 Z' fill='#df4a24'/><path d='M1688.81 506.97 A95.5 95.5 0 0 1 1726.83 530.27 L1706.89 550.21 A67.3 67.3 0 0 0 1680.10 533.79 Z' fill='#ecc46c'/><path d='M1726.83 530.27 A95.5 95.5 0 0 1 1754.80 597.80 L1726.60 597.80 A67.3 67.3 0 0 0 1706.89 550.21 Z' fill='#2a9b89'/><path d='M1680.10 533.79 L1688.81 506.97' stroke='#111' stroke-width='1.1'/><path d='M1706.89 550.21 L1726.83 530.27' stroke='#111' stroke-width='1.1'/><path d='M1594.10 597.80 A65.2 65.2 0 0 1 1709.28 555.93 L1695.33 567.61 A47 47 0 0 0 1612.30 597.80 Z' fill='#284682'/><path d='M1709.28 555.93 A65.2 65.2 0 0 1 1712.76 560.48 L1697.84 570.90 A47 47 0 0 0 1695.33 567.61 Z' fill='#8c8c8c'/><path d='M1657.57 595.35 L1712.87 559.24 L1713.73 560.46 L1661.03 600.25 Z' fill='#000'/><circle cx='1659.3' cy='597.8' r='3.4' fill='#000'/><path d='M1713.30 559.85 L1737.43 542.89' stroke='#000' stroke-width='1.1'/></svg>
<div class='a' style='left:1555px;top:591.5px;font-size:8.6px;color:#222;transform:translateX(-50%)'>0%</div>
<div class='a' style='left:1765px;top:591.5px;font-size:8.6px;color:#222;transform:translateX(-50%)'>100%</div>
<div class='a' style='left:1691px;top:493.5px;font-size:8.6px;color:#222;transform:translateX(-50%)'>60%</div>
<div class='a' style='left:1733px;top:518.5px;font-size:8.6px;color:#222;transform:translateX(-50%)'>75%</div>
<div class='a' style='left:1659.5px;top:605px;font-size:9.6px;color:#222;transform:translateX(-50%)'>80.5%</div>
<div class='a' style='left:1660px;top:632px;font-size:12.8px;color:#3a3a3a;transform:translateX(-50%)'>% Billing and Revenue to Funding</div>
<svg class='a' style='left:1497px;top:667px' width='8' height='6' viewBox='0 0 8 6'><path d='M1.2 1.5 L4 4.3 L6.8 1.5' fill='none' stroke='#4d5a72' stroke-width='1.2'/></svg>
<div class='a' style='left:1513px;top:662px;font-size:13.1px;letter-spacing:0.5px;-webkit-text-stroke:0.4px #58647b;color:#58647b'>Financial Information</div>
<div class='a' style='right:240px;top:685.5px;font-size:10.4px;letter-spacing:0.4px;-webkit-text-stroke:0.55px #474747;color:#474747'>ITD</div>
<div class='a' style='right:172px;top:685.5px;font-size:10.4px;letter-spacing:0.4px;-webkit-text-stroke:0.55px #474747;color:#474747'>Pending</div>
<div class='a' style='right:84px;top:685.5px;font-size:10.4px;letter-spacing:0.4px;-webkit-text-stroke:0.55px #474747;color:#474747'>Total</div>
<div class='a' style='left:1495px;top:701.0px;font-size:10.4px;letter-spacing:0.4px;-webkit-text-stroke:0.55px #474747;color:#474747'>Funding</div>
<div class='a' style='right:240px;top:699.5px;font-size:10.9px;color:#3a3a3a'>6,200,000.00</div>
<div class='a' style='right:172px;top:699.5px;font-size:10.9px;color:#3a3a3a'>55,000.00</div>
<div class='a' style='right:84px;top:699.5px;font-size:10.9px;color:#3a3a3a'>6,255,000.00</div>
<div class='a' style='left:1495px;top:716.0px;font-size:10.4px;letter-spacing:0.4px;-webkit-text-stroke:0.55px #474747;color:#474747'>Revenue</div>
<div class='a' style='right:240px;top:714.5px;font-size:10.9px;color:#3a3a3a'>4,791,749.69</div>
<div class='a' style='right:172px;top:714.5px;font-size:10.9px;color:#3a3a3a'>0.00</div>
<div class='a' style='right:84px;top:714.5px;font-size:10.9px;color:#3a3a3a'>4,791,749.69</div>
<div class='a' style='left:1495px;top:731.0px;font-size:10.4px;letter-spacing:0.4px;-webkit-text-stroke:0.55px #474747;color:#474747'>Billing</div>
<div class='a' style='right:240px;top:729.5px;font-size:10.9px;color:#3a3a3a'>4,991,038.19</div>
<div class='a lk' style='right:172px;top:729.5px;font-size:10.9px;color:#3a3a3a;color:#2e67ad'>0.00</div>
<div class='a' style='right:84px;top:729.5px;font-size:10.9px;color:#3a3a3a'>4,991,038.19</div>
<div class='a' style='left:1495px;top:746.0px;font-size:10.4px;letter-spacing:0.4px;-webkit-text-stroke:0.55px #474747;color:#474747'>Unbilled</div>
<div class='a' style='right:240px;top:744.5px;font-size:10.9px;color:#3a3a3a'>(199,288.50)</div>
<div class='a' style='right:172px;top:744.5px;font-size:10.9px;color:#3a3a3a'>0.00</div>
<div class='a' style='right:84px;top:744.5px;font-size:10.9px;color:#3a3a3a'>(199,288.50)</div>
<div class='a' style='left:1495px;top:768.5px;font-size:10.4px;letter-spacing:0.4px;-webkit-text-stroke:0.55px #474747;color:#474747'>Unbilled Analysis Update</div>
<div class='a' style='left:1495px;top:788px;font-size:10.9px;color:#3a3a3a'>8/7/2025, 10:35 AM</div>
<svg class='a' style='left:1498px;top:816px' width='6' height='8' viewBox='0 0 6 8'><path d='M1.5 1.2 L4.3 4 L1.5 6.8' fill='none' stroke='#4d5a72' stroke-width='1.2'/></svg>
<div class='a' style='left:1513px;top:812px;font-size:13.1px;letter-spacing:0.5px;-webkit-text-stroke:0.4px #58647b;color:#58647b'>Billing Information</div>
<svg class='a' style='left:1497px;top:848px' width='8' height='6' viewBox='0 0 8 6'><path d='M1.2 1.5 L4 4.3 L6.8 1.5' fill='none' stroke='#4d5a72' stroke-width='1.2'/></svg>
<div class='a' style='left:1513px;top:843px;font-size:13.1px;letter-spacing:0.5px;-webkit-text-stroke:0.4px #58647b;color:#58647b'>Project Information</div>
<div class='a' style='left:1495px;top:874px;font-size:10.4px;letter-spacing:0.4px;-webkit-text-stroke:0.55px #474747;color:#474747'>Project Manager</div>
<div class='a' style='left:1646px;top:874px;font-size:10.4px;letter-spacing:0.4px;-webkit-text-stroke:0.55px #474747;color:#474747'>Period of Performance</div>
<div class='a' style='left:1495px;top:894px;font-size:10.9px;color:#3a3a3a;font-size:11.33px;color:#2e67ad'>Applegate, Richard S</div>
<div class='a' style='left:1646px;top:894px;font-size:10.9px;color:#3a3a3a;font-size:11.63px'>04/01/2012 - 11/08/2024</div>
<div class='a' style='left:1495px;top:918px;font-size:10.4px;letter-spacing:0.4px;-webkit-text-stroke:0.55px #474747;color:#474747'>Owning Organization</div>
<div class='a' style='left:1646px;top:918px;font-size:10.4px;letter-spacing:0.4px;-webkit-text-stroke:0.55px #474747;color:#474747'>Project Type</div>
<div class='a' style='left:1495px;top:938.5px;font-size:10.9px;color:#3a3a3a;font-size:10.1px'>01.01.01</div>
<div class='a' style='left:1646px;top:938.5px;font-size:10.9px;color:#3a3a3a;font-size:10.4px'>GOVSERVICE</div>
<div class='a' style='left:6px;top:957px;width:1896px;height:5px;background:#fff;border-radius:0 0 10px 10px'></div>
<div class='a' style='left:0;top:962px;width:1908px;height:4px;background:#e3e7ee'></div>
</body></html>
